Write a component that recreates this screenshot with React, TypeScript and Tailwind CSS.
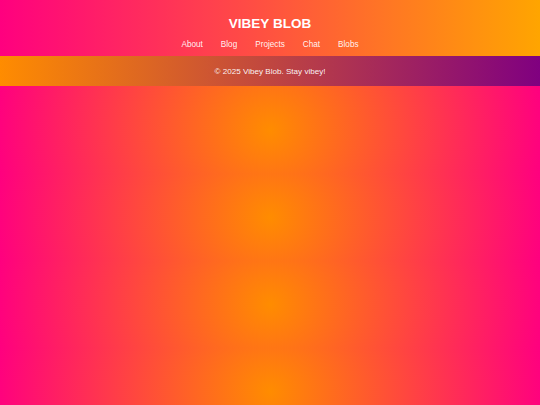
export default function App() {
  const links = ["About", "Blog", "Projects", "Chat", "Blobs"];
  return (
    <div
      className="min-h-[405px] w-full bg-[radial-gradient(circle,#ff8c00,#ff007f)] bg-[length:100%_87px] bg-repeat"
      style={{ fontFamily: '"Liberation Sans", Arial, sans-serif' }}
    >
      <header className="h-[56px] bg-[linear-gradient(90deg,#ff007f,#ffa500)] flex flex-col items-center pt-[16px] text-white">
        <h1 className="text-[13.5px] leading-[16px] font-bold">VIBEY BLOB</h1>
        <nav className="mt-[8px] flex gap-[18px] text-[8.2px] leading-[10px]">
          {links.map((l) => (
            <a key={l} className="text-white/95">
              {l}
            </a>
          ))}
        </nav>
      </header>
      <footer className="h-[30px] pt-[2px] bg-[linear-gradient(90deg,#ff8c00,#800080)] flex items-center justify-center text-white/95 text-[8.1px] leading-[10px]">
        © 2025 Vibey Blob. Stay vibey!
      </footer>
    </div>
  );
}
